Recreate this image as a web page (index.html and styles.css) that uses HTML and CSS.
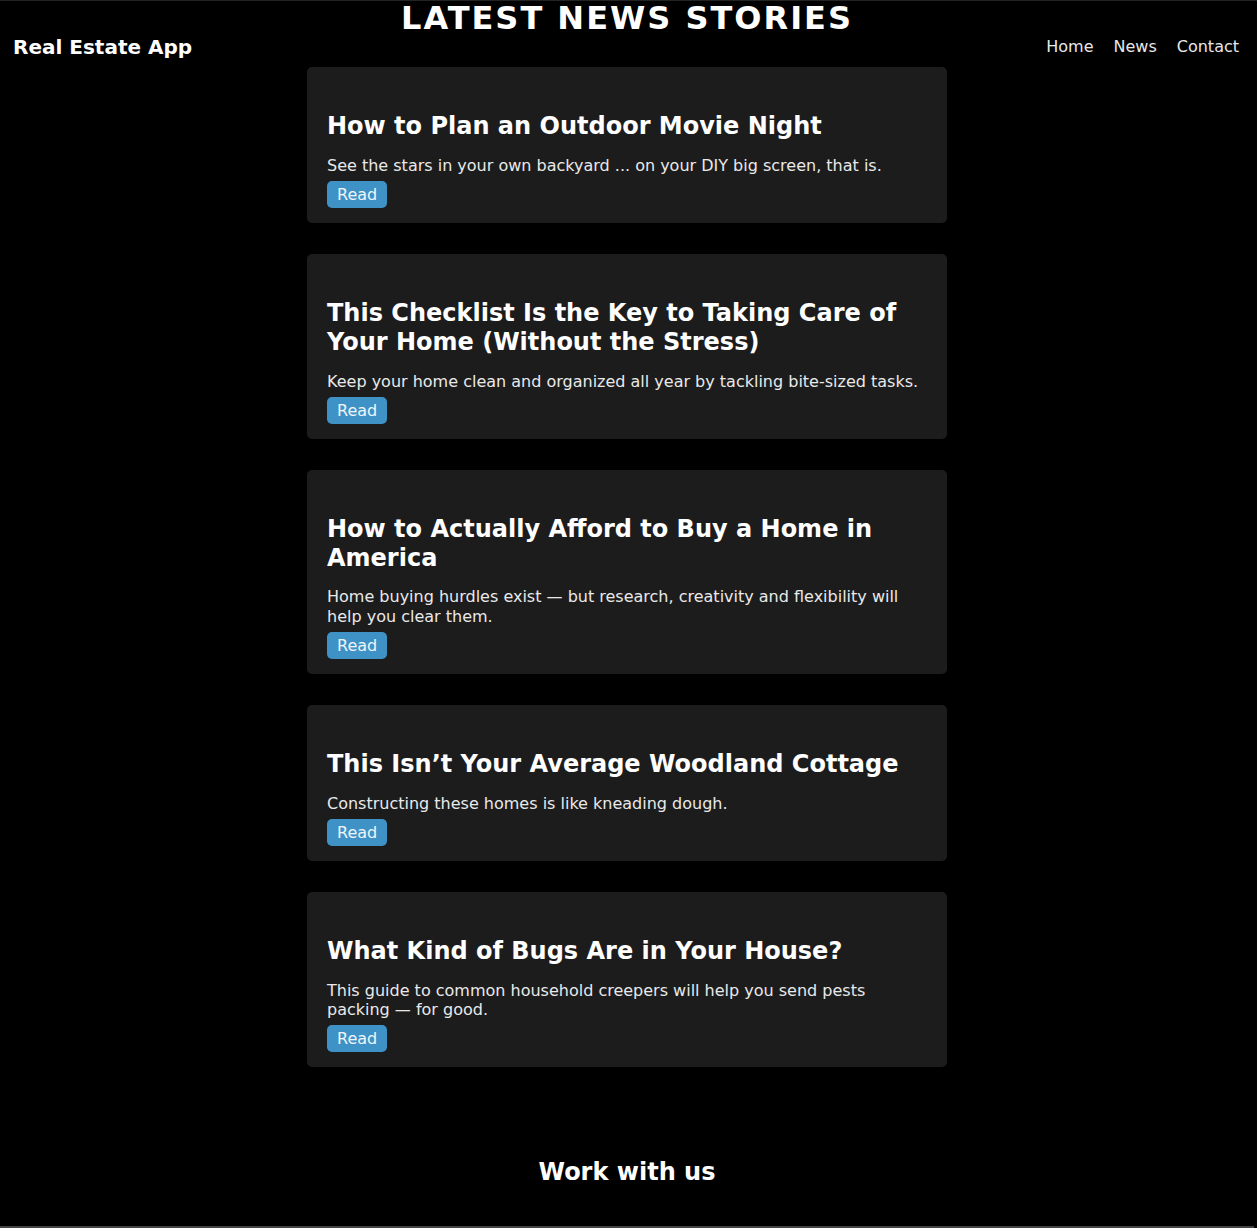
FILE: index.html
```html
<!DOCTYPE html>
<html lang="en">
<head>
<meta charset="utf-8">
<title>Real Estate App - News</title>
<link rel="stylesheet" href="styles.css">
</head>
<body>
<header class="site-header">
  <div class="logo">Real Estate App</div>
  <h1 class="page-title">LATEST NEWS STORIES</h1>
  <nav class="nav">
    <a href="#" class="nav-link">Home</a>
    <a href="#" class="nav-link">News</a>
    <a href="#" class="nav-link">Contact</a>
  </nav>
</header>
<main class="news-list">
  <article class="card">
    <h2 class="card-title">How to Plan an Outdoor Movie Night</h2>
    <p class="card-desc">See the stars in your own backyard ... on your DIY big screen, that is.</p>
    <a href="#" class="btn">Read</a>
  </article>
  <article class="card">
    <h2 class="card-title">This Checklist Is the Key to Taking Care of Your Home (Without the Stress)</h2>
    <p class="card-desc">Keep your home clean and organized all year by tackling bite-sized tasks.</p>
    <a href="#" class="btn">Read</a>
  </article>
  <article class="card">
    <h2 class="card-title">How to Actually Afford to Buy a Home in America</h2>
    <p class="card-desc">Home buying hurdles exist — but research, creativity and flexibility will help you clear them.</p>
    <a href="#" class="btn">Read</a>
  </article>
  <article class="card">
    <h2 class="card-title">This Isn’t Your Average Woodland Cottage</h2>
    <p class="card-desc">Constructing these homes is like kneading dough.</p>
    <a href="#" class="btn">Read</a>
  </article>
  <article class="card">
    <h2 class="card-title">What Kind of Bugs Are in Your House?</h2>
    <p class="card-desc">This guide to common household creepers will help you send pests packing — for good.</p>
    <a href="#" class="btn">Read</a>
  </article>
</main>
<footer class="site-footer">
  <h2 class="footer-title">Work with us</h2>
</footer>
</body>
</html>
```
FILE: styles.css
```css
html {
  background: #000;
}
body {
  margin: 0;
  padding-right: 3px;
  background: #000;
  color: #fff;
  font-family: "DejaVu Sans", "Liberation Sans", sans-serif;
  border-top: 1px solid #232323;
}
.site-header {
  display: grid;
  grid-template-columns: 1fr auto 1fr;
  height: 66px;
  align-items: start;
}
.logo {
  font-size: 20px;
  font-weight: bold;
  margin-top: 34px;
  padding-left: 13px;
  color: #fff;
}
.page-title {
  margin: -2px 0 0;
  font-size: 32px;
  font-weight: bold;
  letter-spacing: 2px;
  line-height: normal;
  color: #fff;
}
.nav {
  justify-self: end;
  display: flex;
  gap: 20px;
  margin-top: 36px;
  padding-right: 15px;
}
.nav-link {
  color: #e8e8e8;
  text-decoration: none;
  font-size: 16px;
}
.news-list {
  width: 640px;
  margin: 0 auto;
  display: flex;
  flex-direction: column;
  gap: 31px;
}
.card {
  background: #1c1c1d;
  border-radius: 5px;
  padding: 15px 20px;
}
.card-title {
  margin: 30px 0 15px;
  font-size: 24px;
  line-height: 1.2;
  font-weight: bold;
  color: #fff;
}
.card-desc {
  margin: 0 0 6px;
  font-size: 16px;
  line-height: 1.2;
  color: #e9e9e9;
}
.btn {
  display: inline-block;
  background: #3f92c6;
  color: #eef5fb;
  text-decoration: none;
  font-size: 16px;
  line-height: 19px;
  padding: 4px 10px;
  border-radius: 5px;
}
.site-footer {
  padding: 91px 0 39px;
  text-align: center;
  border-bottom: 2px solid #444;
}
.footer-title {
  margin: 0;
  font-size: 24px;
  line-height: 1.2;
  font-weight: bold;
  color: #fff;
}
```
